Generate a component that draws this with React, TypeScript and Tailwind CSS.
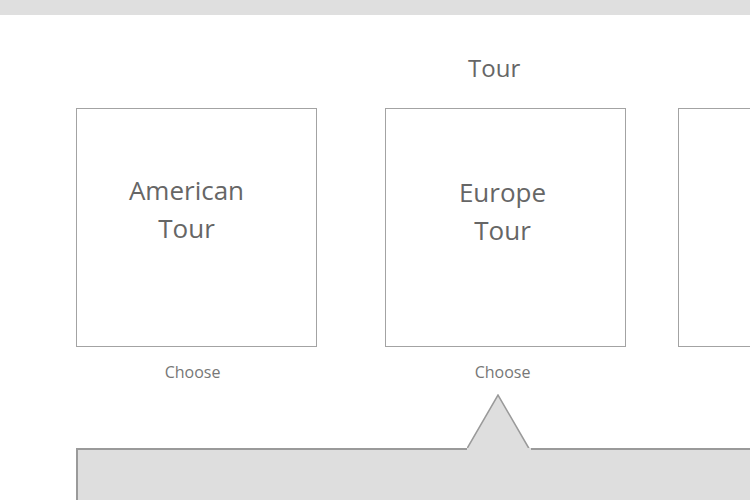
const font = { fontFamily: '"Open Sans", "Noto Sans", sans-serif' };

const TourCard = ({
  lines,
  className,
  textClass,
  chooseClass,
}: {
  lines: string[];
  className: string;
  textClass: string;
  chooseClass: string;
}) => {
  return (
    <div className={`flex shrink-0 flex-col ${className}`}>
      <div className="h-[239px] w-[241px] border border-[#a3a3a3] bg-white">
        <div className={`flex flex-col items-center text-[26px] leading-[38px] text-[#666] ${textClass}`}>
          {lines.map((l) => (
            <span key={l}>{l}</span>
          ))}
        </div>
      </div>
      <p className={`mt-[13px] text-center text-[16px] leading-6 text-[#777] ${chooseClass}`}>Choose</p>
    </div>
  );
};

export default function App() {
  return (
    <div className="h-[500px] w-[750px] overflow-hidden bg-white" style={font}>
      <div className="h-[15px] bg-[#dfdfdf]" />
      <h1 className="mt-[37px] pl-[468px] text-[24px] leading-8 text-[#666]">Tour</h1>
      <div className="mt-[24px] flex pl-[76px]">
        <TourCard
          lines={["American", "Tour"]}
          className=""
          textClass="pt-[62px] pr-[20px]"
          chooseClass="pr-[8px]"
        />
        <TourCard
          lines={["Europe", "Tour"]}
          className="ml-[68px]"
          textClass="pt-[64px] pr-[6px]"
          chooseClass="pr-[6px]"
        />
        <TourCard lines={[]} className="ml-[52px]" textClass="" chooseClass="hidden" />
      </div>
      <div className="relative ml-[76px] mt-[64px] h-[80px] border-l-2 border-t-2 border-[#9a9a9a] bg-[#dedede]">
        <svg
          className="absolute left-[389px] top-[-56px]"
          width="64"
          height="58"
          viewBox="0 0 64 58"
        >
          <polygon points="0,55 31,1 62,55" fill="#dedede" />
          <polyline points="0,54.5 31,1 62,54.5" fill="none" stroke="#9a9a9a" strokeWidth="1.5" />
          <rect x="0" y="54" width="64" height="4" fill="#dedede" />
        </svg>
      </div>
    </div>
  );
}
